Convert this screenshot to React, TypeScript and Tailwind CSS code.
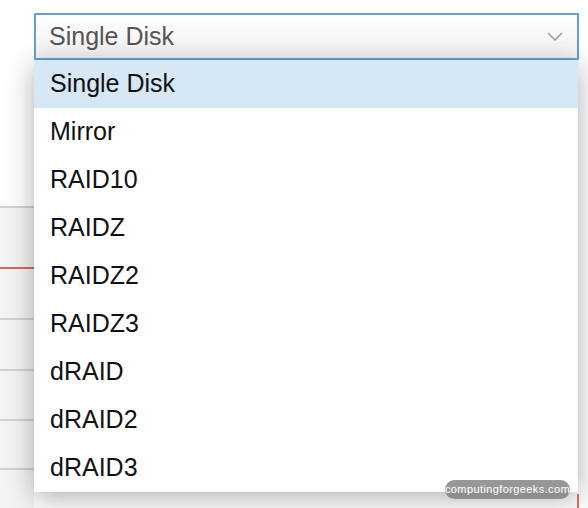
import React from "react";

const items = ["Single Disk", "Mirror", "RAID10", "RAIDZ", "RAIDZ2", "RAIDZ3", "dRAID", "dRAID2", "dRAID3"];

export default function App() {
  return (
    <div className="relative w-[588px] h-[508px] overflow-hidden bg-white" style={{ fontFamily: '"Liberation Sans", Arial, sans-serif' }}>
      {/* background content */}
      <div className="flex flex-col pt-[13px]">
        <div className="ml-[34px] mr-[9px] h-[47px] flex items-center justify-between pl-[13px] pr-[14px] border-2 border-[#62a0dc] bg-gradient-to-b from-white to-[#f2f2f2] rounded-[1px]">
          <span className="text-[25px] text-[#555] leading-none">Single Disk</span>
          <svg width="16" height="9" viewBox="0 0 16 9" fill="none">
            <path d="M1 1 L8 8 L15 1" stroke="#a0a0a0" strokeWidth="1.6" />
          </svg>
        </div>
        <div className="mt-[146px] w-[34px] flex flex-col bg-[#f4f4f4]">
          <div className="h-[61px] border-t-2 border-[#d2d2d2]" />
          <div className="h-[51px] border-t-2 border-[#d96a55]" />
          <div className="h-[51px] border-t-2 border-[#d2d2d2]" />
          <div className="h-[50px] border-t-2 border-[#d2d2d2]" />
          <div className="h-[49px] border-t-2 border-[#d2d2d2]" />
          <div className="h-[60px] border-t-2 border-[#d2d2d2]" />
        </div>
      </div>

      {/* dropdown */}
      <div className="absolute left-[34px] top-[60px] w-[544px] bg-white shadow-[0_6px_26px_rgba(0,0,0,0.32)] flex flex-col">
        {items.map((t, i) => (
          <div
            key={t}
            className={
              i === 0
                ? "h-[48px] flex items-center pl-[16px] bg-[#d6e7f5] text-[25px] text-[#111]"
                : "h-[48px] flex items-center pl-[16px] text-[25px] text-[#111]"
            }
          >
            {t}
          </div>
        ))}
      </div>

      {/* red mark bottom right */}
      <div className="absolute left-[577px] top-[494px] w-[2px] h-[14px] bg-[#d96a55]" />

      {/* watermark */}
      <div className="absolute left-[445px] top-[480px] h-[19px] w-[125px] rounded-full bg-[rgba(125,125,125,0.8)] flex items-center justify-center">
        <span className="text-[11px] tracking-[0.4px] text-white leading-none">computingforgeeks.com</span>
      </div>
    </div>
  );
}
